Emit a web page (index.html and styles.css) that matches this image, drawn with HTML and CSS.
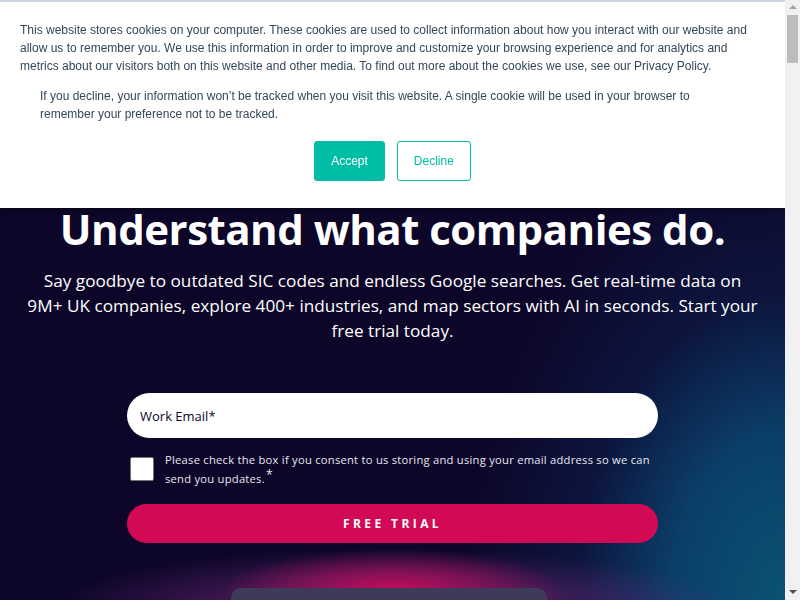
FILE: index.html
```html
<!DOCTYPE html>
<html lang="en">
<head>
<meta charset="utf-8">
<title>Understand what companies do.</title>
<link rel="stylesheet" href="styles.css">
</head>
<body>
<div class="page">
  <div class="cookie-banner">
    <div class="cookie-inner">
      <p class="cookie-text">This website stores cookies on your computer. These cookies are used to collect information about how you interact with our website and allow us to remember you. We use this information in order to improve and customize your browsing experience and for analytics and metrics about our visitors both on this website and other media. To find out more about the cookies we use, see our Privacy Policy.</p>
      <p class="cookie-text cookie-indent">If you decline, your information won’t be tracked when you visit this website. A single cookie will be used in your browser to remember your preference not to be tracked.</p>
      <div class="cookie-actions">
        <button class="btn-accept">Accept</button>
        <button class="btn-decline">Decline</button>
      </div>
    </div>
  </div>

  <section class="hero">
    <h1 class="hero-title">Understand what companies do.</h1>
    <p class="hero-lead">Say goodbye to outdated SIC codes and endless Google searches. Get real-time data on 9M+ UK companies, explore 400+ industries, and map sectors with AI in seconds. Start your free trial today.</p>
    <form class="signup">
      <input class="email" type="email" placeholder="Work Email*">
      <label class="consent">
        <span class="box"></span>
        <span class="consent-text">Please check the box if you consent to us storing and using your email address so we can send you updates.<span class="req">*</span></span>
      </label>
      <button class="trial" type="button">FREE TRIAL</button>
    </form>
    <div class="preview">
      <div class="preview-card"><span class="preview-text">Industry Explorer</span></div>
    </div>
  </section>
  <section class="rest"></section>
</div>
<div class="scrollbar" aria-hidden="true">
  <span class="arrow-up"></span>
  <span class="thumb"></span>
  <span class="arrow-down"></span>
</div>
</body>
</html>
```

FILE: styles.css
```css
html, body {
  margin: 0;
  padding: 0;
}
body {
  font-family: "Open Sans", "Liberation Sans", sans-serif;
  background: #ffffff;
  overflow-x: hidden;
}
.page {
  margin-right: 15px;
}
.cookie-banner {
  position: fixed;
  top: 0;
  left: 0;
  right: 15px;
  z-index: 10;
  background: #ffffff;
  border-top: 2px solid #cbd6e2;
  box-shadow: 0 1px 6px rgba(0, 0, 0, 0.45);
  height: 206px;
}
.cookie-inner {
  padding: 19px 20px 0 20px;
}
.cookie-text {
  margin: 0;
  max-width: 730px;
  font-family: "Liberation Sans", Arial, sans-serif;
  font-size: 12px;
  line-height: 18px;
  color: #33475b;
}
.cookie-indent {
  max-width: 690px;
  margin: 12px 20px 0 20px;
}
.cookie-actions {
  display: flex;
  justify-content: center;
  gap: 12px;
  margin-top: 18px;
}
.cookie-actions button {
  font-family: "Liberation Sans", Arial, sans-serif;
  font-size: 12px;
  height: 40px;
  border-radius: 3px;
  border: 1px solid #00bda5;
  padding: 0 16px;
  cursor: pointer;
}
.btn-accept {
  background: #00bda5;
  color: #ffffff;
}
.btn-decline {
  background: #ffffff;
  color: #00bda5;
}

.hero {
  position: relative;
  height: 600px;
  overflow: hidden;
  padding-top: 200px;
  box-sizing: border-box;
  background:
    radial-gradient(ellipse 170px 40px at 50% 590px, rgba(215, 10, 95, 0.85) 0%, rgba(190, 15, 95, 0.5) 50%, rgba(13, 6, 41, 0) 100%),
    radial-gradient(ellipse 340px 62px at 50% 610px, rgba(150, 30, 110, 0.8) 0%, rgba(110, 40, 120, 0.45) 55%, rgba(13, 6, 41, 0) 100%),
    radial-gradient(ellipse 320px 470px at 100% 100%, #0a5272 0%, #0b3f68 35%, rgba(12, 30, 75, 0.6) 65%, rgba(13, 6, 41, 0) 100%),
    #0d0629;
  text-align: center;
  color: #ffffff;
}
.hero-title {
  margin: 0;
  font-family: "Open Sans", sans-serif;
  font-weight: 700;
  font-size: 42px;
  line-height: 58px;
  letter-spacing: -0.5px;
}
.hero-lead {
  margin: 10px auto 0;
  max-width: 735px;
  font-size: 17.2px;
  line-height: 25px;
  color: #ffffff;
}
.signup {
  width: 531px;
  margin: 50px auto 0;
  display: flex;
  flex-direction: column;
}
.email {
  height: 45px;
  border: none;
  border-radius: 23px;
  padding: 0 13px;
  font-family: "Open Sans", sans-serif;
  font-size: 13px;
  color: #0d0629;
  background: #ffffff;
  outline: none;
}
.email::placeholder {
  color: #0d0629;
}
.consent {
  display: flex;
  align-items: flex-start;
  gap: 11px;
  height: 24px;
  margin-top: 19px;
  text-align: left;
}
.box {
  flex: none;
  width: 22px;
  height: 22px;
  margin-left: 3px;
  background: #ffffff;
  border: 1px solid #767676;
  border-radius: 2px;
}
.consent-text {
  font-size: 11.2px;
  line-height: 19px;
  color: #e8e6f0;
  letter-spacing: 0.25px;
  margin-top: -7px;
}
.req {
  font-size: 12px;
  line-height: 0;
  vertical-align: 4px;
  margin-left: 1px;
}
.trial {
  margin-top: 23px;
  height: 39px;
  border: none;
  border-radius: 20px;
  background: #d20a56;
  color: #ffffff;
  font-family: "Open Sans", sans-serif;
  font-weight: 700;
  font-size: 12px;
  letter-spacing: 3.4px;
  cursor: pointer;
}
.preview {
  display: flex;
  justify-content: center;
  margin-top: 45px;
  padding-right: 8px;
}
.preview-card {
  width: 316px;
  height: 60px;
  border-radius: 10px;
  background: #3e3a5a;
  text-align: left;
  padding: 6px 12px;
  box-sizing: border-box;
}
.preview-text {
  font-size: 11px;
  line-height: 14px;
  color: rgba(255, 255, 255, 0.7);
}
.rest {
  height: 6600px;
  background: #ffffff;
}

.scrollbar {
  position: fixed;
  top: 0;
  right: 0;
  width: 15px;
  height: 100%;
  background: #f1f1f1;
  z-index: 20;
}
.arrow-up,
.arrow-down {
  position: absolute;
  left: 4px;
  width: 0;
  height: 0;
  border-left: 4px solid transparent;
  border-right: 4px solid transparent;
}
.arrow-up {
  top: 5px;
  border-bottom: 4px solid #a3a3a3;
}
.arrow-down {
  bottom: 6px;
  border-top: 4px solid #505050;
}
.thumb {
  position: absolute;
  top: 15px;
  left: 2px;
  width: 11px;
  height: 48px;
  background: #bdbdbd;
}
```
